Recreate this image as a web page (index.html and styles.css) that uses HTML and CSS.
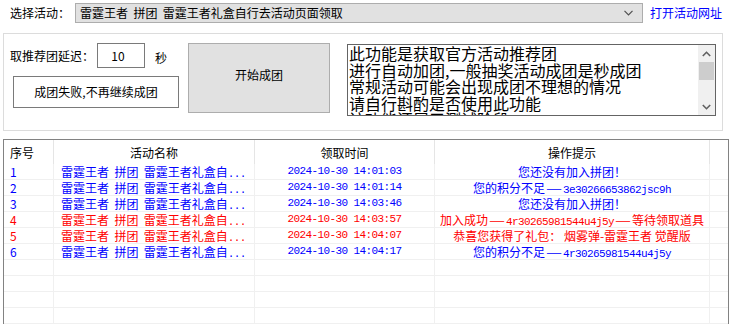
FILE: index.html
```html
<!DOCTYPE html>
<html>
<head>
<meta charset="utf-8">
<link rel="stylesheet" href="styles.css">
</head>
<body>
<div class="top">
  <span class="lbl">选择活动：</span>
  <div class="combo">
    <span class="combo-text">雷霆王者&nbsp;&nbsp;拼团&nbsp;&nbsp;雷霆王者礼盒自行去活动页面领取</span>
    <svg class="chev" width="9" height="6" viewBox="0 0 9 6"><polyline points="0.5,0.8 4.5,4.8 8.5,0.8" fill="none" stroke="#505050" stroke-width="1.2"/></svg>
  </div>
  <span class="link">打开活动网址</span>
</div>

<div class="group">
  <div class="leftcol">
    <div class="delay">
      <span class="dlbl">取推荐团延迟：</span>
      <div class="input">10</div>
      <span class="sec">秒</span>
    </div>
    <div class="btn small">成团失败,不再继续成团</div>
  </div>
  <div class="btn big">开始成团</div>
  <div class="memo">
    <div class="memo-text">
      <div>此功能是获取官方活动推荐团</div>
      <div>进行自动加团,一般抽奖活动成团是秒成团</div>
      <div>常规活动可能会出现成团不理想的情况</div>
      <div>请自行斟酌是否使用此功能</div>
      <div>该功能还属于测试阶段</div>
    </div>
    <div class="sbar">
      <svg class="arr" width="9" height="6" viewBox="0 0 9 6"><polyline points="0.8,5 4.5,1.3 8.2,5" fill="none" stroke="#606060" stroke-width="1.6"/></svg>
      <div class="thumb"></div>
      <div class="sfill"></div>
      <svg class="arr" width="9" height="6" viewBox="0 0 9 6"><polyline points="0.8,1 4.5,4.7 8.2,1" fill="none" stroke="#606060" stroke-width="1.6"/></svg>
    </div>
  </div>
</div>

<div class="table">
  <div class="hd c1 left">序号</div>
  <div class="hd">活动名称</div>
  <div class="hd">领取时间</div>
  <div class="hd">操作提示</div>
  <div class="hd last"></div>

  <div class="td c1 blue">1</div>
  <div class="td name blue">雷霆王者&nbsp;&nbsp;拼团&nbsp;&nbsp;雷霆王者礼盒自<span class="mono">...</span></div>
  <div class="td mono center blue">2024-10-30 14:01:03</div>
  <div class="td center blue">您还没有加入拼团！</div>
  <div class="td last"></div>

  <div class="td c1 blue">2</div>
  <div class="td name blue">雷霆王者&nbsp;&nbsp;拼团&nbsp;&nbsp;雷霆王者礼盒自<span class="mono">...</span></div>
  <div class="td mono center blue">2024-10-30 14:01:14</div>
  <div class="td center blue">您的积分不足<span class="dash">—</span><span class="mono">3e30266653862jsc9h</span></div>
  <div class="td last"></div>

  <div class="td c1 blue">3</div>
  <div class="td name blue">雷霆王者&nbsp;&nbsp;拼团&nbsp;&nbsp;雷霆王者礼盒自<span class="mono">...</span></div>
  <div class="td mono center blue">2024-10-30 14:03:46</div>
  <div class="td center blue">您还没有加入拼团！</div>
  <div class="td last"></div>

  <div class="td c1 red">4</div>
  <div class="td name red">雷霆王者&nbsp;&nbsp;拼团&nbsp;&nbsp;雷霆王者礼盒自<span class="mono">...</span></div>
  <div class="td mono center red">2024-10-30 14:03:57</div>
  <div class="td center red">加入成功<span class="dash">—</span><span class="mono">4r30265981544u4j5y</span><span class="dash">—</span>等待领取道具</div>
  <div class="td last"></div>

  <div class="td c1 red">5</div>
  <div class="td name red">雷霆王者&nbsp;&nbsp;拼团&nbsp;&nbsp;雷霆王者礼盒自<span class="mono">...</span></div>
  <div class="td mono center red">2024-10-30 14:04:07</div>
  <div class="td center red">恭喜您获得了礼包：&nbsp;烟雾弹-雷霆王者&nbsp;觉醒版</div>
  <div class="td last"></div>

  <div class="td c1 blue">6</div>
  <div class="td name blue">雷霆王者&nbsp;&nbsp;拼团&nbsp;&nbsp;雷霆王者礼盒自<span class="mono">...</span></div>
  <div class="td mono center blue">2024-10-30 14:04:17</div>
  <div class="td center blue">您的积分不足<span class="dash">—</span><span class="mono">4r30265981544u4j5y</span></div>
  <div class="td last"></div>

  <div class="td c1"></div><div class="td"></div><div class="td"></div><div class="td"></div><div class="td last"></div>
  <div class="td c1"></div><div class="td"></div><div class="td"></div><div class="td"></div><div class="td last"></div>
  <div class="td c1"></div><div class="td"></div><div class="td"></div><div class="td"></div><div class="td last"></div>
  <div class="td c1"></div><div class="td"></div><div class="td"></div><div class="td"></div><div class="td last"></div>
</div>
</body>
</html>
```

FILE: styles.css
```css
* { box-sizing: border-box; }
html, body { margin: 0; padding: 0; background: #ffffff; overflow: hidden; }
body {
  width: 730px; height: 324px;
  font-family: "Noto Sans CJK SC", "Noto Sans", sans-serif;
  font-size: 12px;
  line-height: 16px;
  color: #000;
}

.top {
  display: flex;
  align-items: center;
  height: 20px;
  margin-top: 3px;
  padding-left: 10px;
}
.lbl { width: 65px; }
.combo {
  width: 568px;
  height: 20px;
  background: #e1e1e1;
  border: 1px solid #adadad;
  display: flex;
  align-items: center;
  padding-left: 4px;
  padding-right: 9px;
}
.combo-text { flex: 1; }
.chev { display: block; }
.link { color: #0000ff; margin-left: 7px; }

.group {
  margin: 10px 0 0 3px;
  width: 720px;
  height: 98px;
  border: 1px solid #dcdcdc;
  display: flex;
  align-items: flex-start;
  padding-top: 9px;
  padding-left: 6px;
}
.leftcol { display: flex; flex-direction: column; width: 169px; }
.delay { display: flex; align-items: center; height: 25px; }
.dlbl { width: 87px; }
.input {
  width: 48px; height: 25px;
  border: 1px solid #7a7a7a;
  text-align: center;
  line-height: 23px;
  padding-right: 6px;
}
.sec { margin-left: 10px; margin-top: 4px; }
.btn {
  display: flex; align-items: center; justify-content: center;
  border: 1px solid #adadad;
}
.small {
  margin-top: 8px; margin-left: 3px;
  width: 166px; height: 32px;
  background: #ffffff;
  border-color: #7a7a7a;
}
.big {
  margin-left: 9px;
  width: 142px; height: 70px;
  background: #e1e1e1;
  padding-bottom: 6px;
}
.memo {
  margin-left: 17px;
  margin-top: 1px;
  width: 369px; height: 72px;
  border: 1px solid #646464;
  display: flex;
  overflow: hidden;
}
.memo-text {
  flex: 1;
  padding-left: 1px;
  font-size: 16px;
  line-height: 16.6px;
  white-space: nowrap;
  overflow: hidden;
}
.sbar {
  width: 17px;
  background: #f0f0f0;
  display: flex;
  flex-direction: column;
  align-items: center;
}
.arr { display: block; margin: 6px 0 5px; }
.thumb { width: 15px; height: 18px; background: #cdcdcd; }
.sfill { flex: 1; }

.table {
  margin: 8px 0 0 3px;
  width: 726px;
  height: 200px;
  border: 1px solid #828282;
  border-bottom: none;
  display: grid;
  grid-template-columns: 50px 201px 180px 275px 1fr;
  grid-auto-rows: 16px;
  grid-template-rows: 24px;
  overflow: hidden;
}
.hd {
  border-right: 1px solid #e5e5e5;
  text-align: center;
  line-height: 24px;
  padding-top: 1px;
}
.hd.left { text-align: left; padding-left: 6px; }
.hd.last { border-right: none; }
.td {
  border-right: 1px solid #f0f0f0;
  border-bottom: 1px solid #f0f0f0;
  white-space: nowrap;
  overflow: hidden;
  line-height: 15px;
}
.td.c1 { padding-left: 6px; }
.td.last { border-right: none; }
.name { padding-left: 7px; }
.center { text-align: center; }
.mono {
  font-family: "Liberation Mono", "DejaVu Sans Mono", monospace;
  font-size: 11px;
  letter-spacing: -0.6px;
}
.dash { display: inline-block; width: 18px; text-align: center; transform: scaleX(1.5); }
.blue { color: #0000ff; }
.red { color: #ff0000; }
```
